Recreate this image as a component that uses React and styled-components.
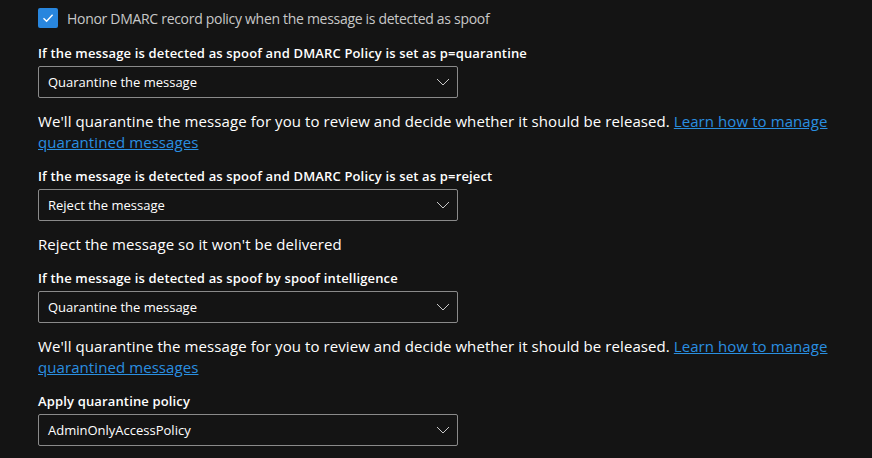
import React from 'react'
import styled, { createGlobalStyle } from 'styled-components'

const GlobalStyle = createGlobalStyle`
  html, body {
    margin: 0;
    background: #141414;
  }
  body {
    font-family: "Segoe UI", "Open Sans", "Noto Sans", sans-serif;
    -webkit-font-smoothing: antialiased;
  }
`

// STYLE
const Page = styled.div`
  width: 872px;
  height: 458px;
  box-sizing: border-box;
  padding: 8px 0 0 38px;
  background: #141414;
  overflow: hidden;
`
const CheckRow = styled.label`
  display: flex;
  align-items: center;
  gap: 9px;
  height: 20px;
  margin-bottom: 16px;
  font-size: 14px;
  letter-spacing: -0.3px;
  color: #c8c8c8;
`
const Box = styled.span`
  display: flex;
  align-items: center;
  justify-content: center;
  width: 20px;
  height: 20px;
  border-radius: 2px;
  background: #2886de;
`
const Field = styled.div`
  display: flex;
  flex-direction: column;
  width: 800px;
`
const Label = styled.div`
  font-size: 13px;
  font-weight: 600;
  letter-spacing: 0.15px;
  color: #ffffff;
  line-height: 18px;
  margin-bottom: 4px;
`
const Select = styled.div`
  display: flex;
  align-items: center;
  justify-content: space-between;
  width: 420px;
  height: 32px;
  box-sizing: border-box;
  padding: 0 7px 0 9px;
  border: 1px solid #8a8a8a;
  border-radius: 2px;
  font-size: 13px;
  color: #ffffff;
`
const Desc = styled.p`
  margin: 13px 0 14px;
  font-size: 15px;
  line-height: 21px;
  letter-spacing: 0.08px;
  color: #ffffff;
  width: 800px;

  a {
    color: #2a8fe0;
    text-decoration: underline;
  }
`

const Check = () => (
  <svg width="14" height="14" viewBox="0 0 14 14">
    <path d="M2.5 7.2 L5.6 10.2 L11.6 3.8" fill="none" stroke="#fff" strokeWidth="1.4" />
  </svg>
)

const Chevron = () => (
  <svg width="14" height="8" viewBox="0 0 14 8">
    <path d="M1 1 L7 7 L13 1" fill="none" stroke="#c8c8c8" strokeWidth="1" />
  </svg>
)

const Dropdown = ({ label, value }) => (
  <Field>
    <Label>{label}</Label>
    <Select>
      <span>{value}</span>
      <Chevron />
    </Select>
  </Field>
)

const quarantineText = (
  <>
    We'll quarantine the message for you to review and decide whether it should be released.{' '}
    <a href="#">Learn how to manage quarantined messages</a>
  </>
)

export default function App() {
  return (
    <Page>
      <GlobalStyle />
      <CheckRow>
        <Box>
          <Check />
        </Box>
        Honor DMARC record policy when the message is detected as spoof
      </CheckRow>
      <Dropdown
        label="If the message is detected as spoof and DMARC Policy is set as p=quarantine"
        value="Quarantine the message"
      />
      <Desc>{quarantineText}</Desc>
      <Dropdown
        label="If the message is detected as spoof and DMARC Policy is set as p=reject"
        value="Reject the message"
      />
      <Desc>Reject the message so it won't be delivered</Desc>
      <Dropdown label="If the message is detected as spoof by spoof intelligence" value="Quarantine the message" />
      <Desc>{quarantineText}</Desc>
      <Dropdown label="Apply quarantine policy" value="AdminOnlyAccessPolicy" />
    </Page>
  )
}
